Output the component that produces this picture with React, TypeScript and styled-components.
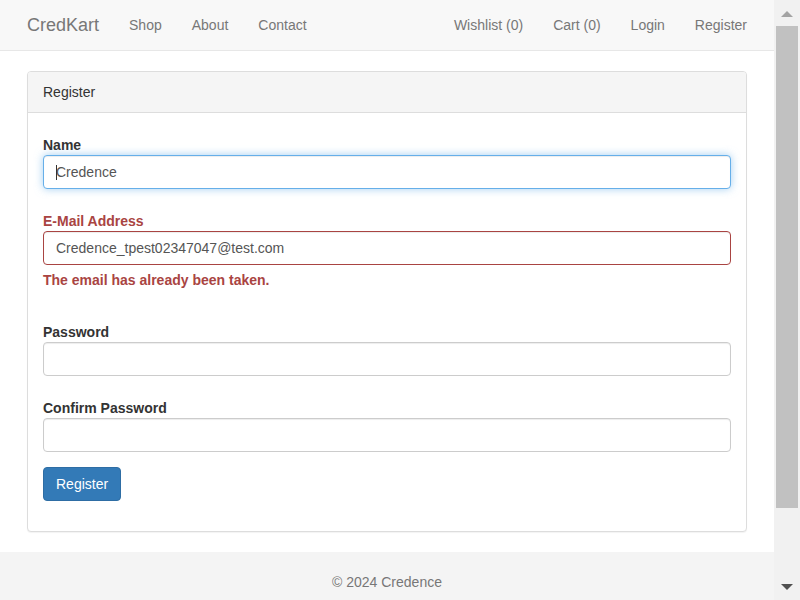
import styled, { createGlobalStyle, css } from "styled-components";

const GlobalStyle = createGlobalStyle`
  body {
    margin: 0;
    background: #fff;
    font-family: "Liberation Sans", Arial, Helvetica, sans-serif;
    font-size: 14px;
    line-height: 20px;
    color: #333;
  }
  * {
    box-sizing: border-box;
  }
`;

const Viewport = styled.div`
  display: flex;
  height: 100vh;
  overflow: hidden;
`;

const Page = styled.div`
  flex: 1;
  min-width: 0;
  overflow: hidden;
`;

// window scrollbar, drawn since the headless browser hides its own
const Scrollbar = styled.div`
  display: flex;
  flex-direction: column;
  width: 26px;
  flex-shrink: 0;
  background: #f1f1f1;
`;

const ScrollButton = styled.div`
  display: flex;
  justify-content: center;
  align-items: center;
  height: 26px;
`;

const Arrow = styled.span<{ $dir: "up" | "down" }>`
  width: 0;
  height: 0;
  border-left: 6px solid transparent;
  border-right: 6px solid transparent;
  ${({ $dir }) =>
    $dir === "up"
      ? css`
          border-bottom: 6px solid #a3a3a3;
          margin-top: 2px;
        `
      : css`
          border-top: 6px solid #505050;
        `}
`;

const Thumb = styled.div`
  height: 482px;
  margin: 0 2px;
  background: #c1c1c1;
`;

const Track = styled.div`
  flex: 1;
`;

const Navbar = styled.nav`
  height: 51px;
  background: #f8f8f8;
  border-bottom: 1px solid #e7e7e7;
  margin-bottom: 20px;
`;

const Container = styled.div`
  width: 750px;
  margin: 0 auto;
  padding: 0 15px;
`;

const NavInner = styled(Container)`
  display: flex;
  align-items: center;
  height: 50px;
`;

const Brand = styled.a`
  font-size: 18px;
  line-height: 20px;
  padding: 15px;
  margin-left: -15px;
  color: #777;
  text-decoration: none;
`;

const NavList = styled.ul<{ $right?: boolean }>`
  display: flex;
  list-style: none;
  margin: 0;
  padding: 0;
  ${({ $right }) =>
    $right &&
    css`
      margin-left: auto;
      margin-right: -15px;
    `}
`;

const NavLink = styled.a`
  display: block;
  padding: 15px;
  color: #777;
  text-decoration: none;
`;

const Panel = styled.div`
  border: 1px solid #ddd;
  border-radius: 4px;
  background: #fff;
  box-shadow: 0 1px 1px rgba(0, 0, 0, 0.05);
`;

const PanelHeading = styled.div`
  padding: 10px 15px;
  background: #f5f5f5;
  border-bottom: 1px solid #ddd;
  border-radius: 3px 3px 0 0;
  color: #333;
`;

const PanelBody = styled.div`
  padding: 22px 15px 15px;
`;

const FormGroup = styled.div<{ $mb: number }>`
  margin-bottom: ${({ $mb }) => $mb}px;
`;

const Label = styled.label<{ $error?: boolean }>`
  display: block;
  font-weight: bold;
  line-height: 20px;
  color: ${({ $error }) => ($error ? "#a94442" : "#333")};
`;

const InputWrap = styled.div`
  position: relative;
`;

const Caret = styled.span`
  position: absolute;
  left: 13px;
  top: 10px;
  width: 1px;
  height: 15px;
  background: #333;
`;

const Input = styled.input<{ $state?: "focus" | "error" }>`
  display: block;
  width: 100%;
  height: 34px;
  padding: 6px 12px;
  font-family: inherit;
  font-size: 14px;
  line-height: 20px;
  color: #555;
  background: #fff;
  border: 1px solid #ccc;
  border-radius: 4px;
  outline: none;
  box-shadow: inset 0 1px 1px rgba(0, 0, 0, 0.075);
  ${({ $state }) =>
    $state === "focus" &&
    css`
      border-color: #66afe9;
      box-shadow: inset 0 1px 1px rgba(0, 0, 0, 0.075),
        0 0 8px rgba(102, 175, 233, 0.6);
    `}
  ${({ $state }) =>
    $state === "error" &&
    css`
      border-color: #a94442;
    `}
`;

const HelpBlock = styled.span`
  display: block;
  margin-top: 5px;
  color: #a94442;
  font-weight: bold;
`;

const PrimaryButton = styled.button`
  height: 34px;
  padding: 6px 12px;
  font-family: inherit;
  font-size: 14px;
  line-height: 20px;
  color: #fff;
  background: #337ab7;
  border: 1px solid #2e6da4;
  border-radius: 4px;
  cursor: pointer;
`;

const Footer = styled.footer`
  margin-top: 20px;
  height: 130px;
  padding-top: 20px;
  background: #f4f4f4;
  color: #777;
  text-align: center;
`;

export default function App() {
  return (
    <Viewport>
      <GlobalStyle />
      <Page>
        <Navbar>
          <NavInner>
            <Brand href="#">CredKart</Brand>
            <NavList>
              <li><NavLink href="#">Shop</NavLink></li>
              <li><NavLink href="#">About</NavLink></li>
              <li><NavLink href="#">Contact</NavLink></li>
            </NavList>
            <NavList $right>
              <li><NavLink href="#">Wishlist (0)</NavLink></li>
              <li><NavLink href="#">Cart (0)</NavLink></li>
              <li><NavLink href="#">Login</NavLink></li>
              <li><NavLink href="#">Register</NavLink></li>
            </NavList>
          </NavInner>
        </Navbar>
        <Container>
          <Panel>
            <PanelHeading>Register</PanelHeading>
            <PanelBody>
              <form onSubmit={(e) => e.preventDefault()}>
                <FormGroup $mb={22}>
                  <Label htmlFor="name">Name</Label>
                  <InputWrap>
                    <Input id="name" type="text" $state="focus" value="Credence" readOnly />
                    <Caret />
                  </InputWrap>
                </FormGroup>
                <FormGroup $mb={32}>
                  <Label htmlFor="email" $error>E-Mail Address</Label>
                  <Input
                    id="email"
                    type="email"
                    $state="error"
                    value="Credence_tpest02347047@test.com"
                    readOnly
                  />
                  <HelpBlock>The email has already been taken.</HelpBlock>
                </FormGroup>
                <FormGroup $mb={22}>
                  <Label htmlFor="password">Password</Label>
                  <Input id="password" type="password" />
                </FormGroup>
                <FormGroup $mb={15}>
                  <Label htmlFor="password-confirm">Confirm Password</Label>
                  <Input id="password-confirm" type="password" />
                </FormGroup>
                <FormGroup $mb={15}>
                  <PrimaryButton type="submit">Register</PrimaryButton>
                </FormGroup>
              </form>
            </PanelBody>
          </Panel>
        </Container>
        <Footer>© 2024 Credence</Footer>
      </Page>
      <Scrollbar>
        <ScrollButton>
          <Arrow $dir="up" />
        </ScrollButton>
        <Thumb />
        <Track />
        <ScrollButton>
          <Arrow $dir="down" />
        </ScrollButton>
      </Scrollbar>
    </Viewport>
  );
}
